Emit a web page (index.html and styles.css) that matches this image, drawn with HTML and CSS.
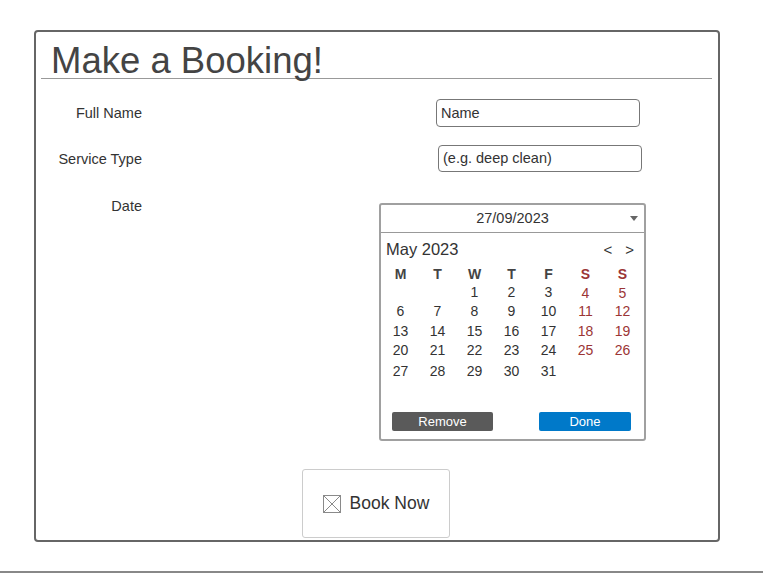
FILE: index.html
```html
<!DOCTYPE html>
<html>
<head>
<meta charset="utf-8">
<link rel="stylesheet" href="styles.css">
</head>
<body>
<div class="page">
  <div class="card">
    <h1 class="title">Make a Booking!</h1>
    <div class="row row-name">
      <div class="label">Full Name</div>
      <div class="input input-name">Name</div>
    </div>
    <div class="row row-service">
      <div class="label">Service Type</div>
      <div class="input input-service">(e.g. deep clean)</div>
    </div>
    <div class="row row-date">
      <div class="label label-date">Date</div>
      <div class="picker">
        <div class="picker-head">
          <span class="head-spacer"></span>
          <span class="head-value">27/09/2023</span>
          <span class="head-arrow">
            <svg width="8" height="5" viewBox="0 0 8 5"><path d="M0 0 L8 0 L4 5 Z" fill="#666"/></svg>
          </span>
        </div>
        <div class="month-row">
          <span class="month">May 2023</span>
          <span class="nav"><span>&lt;</span><span>&gt;</span></span>
        </div>
        <div class="cal">
          <span class="dh">M</span><span class="dh">T</span><span class="dh">W</span><span class="dh">T</span><span class="dh">F</span><span class="dh we">S</span><span class="dh we">S</span>
          <span></span><span></span><span>1</span><span>2</span><span>3</span><span class="we low">4</span><span class="we low">5</span>
          <span>6</span><span>7</span><span>8</span><span>9</span><span>10</span><span class="we">11</span><span class="we">12</span>
          <span>13</span><span>14</span><span>15</span><span>16</span><span>17</span><span class="we">18</span><span class="we">19</span>
          <span>20</span><span>21</span><span>22</span><span>23</span><span>24</span><span class="we">25</span><span class="we">26</span>
          <span>27</span><span>28</span><span>29</span><span>30</span><span>31</span><span></span><span></span>
        </div>
        <div class="picker-actions">
          <button class="btn btn-remove">Remove</button>
          <button class="btn btn-done">Done</button>
        </div>
      </div>
    </div>
    <div class="book-wrap">
      <button class="book">
        <svg width="18" height="18" viewBox="0 0 18 18">
          <rect x="0.5" y="0.5" width="17" height="17" fill="none" stroke="#8a8a8a" stroke-width="1"/>
          <line x1="0.5" y1="0.5" x2="17.5" y2="17.5" stroke="#8a8a8a" stroke-width="1"/>
          <line x1="17.5" y1="0.5" x2="0.5" y2="17.5" stroke="#8a8a8a" stroke-width="1"/>
        </svg>
        <span>Book Now</span>
      </button>
    </div>
  </div>
  <div class="bottom-line"></div>
</div>
</body>
</html>
```
FILE: styles.css
```css
* { box-sizing: border-box; }
html, body { margin: 0; padding: 0; background: #fff; }
body {
  font-family: "Liberation Sans", Arial, sans-serif;
  color: #333;
  width: 763px;
  height: 581px;
  overflow: hidden;
}
.page { padding-top: 30px; }
.card {
  margin-left: 34px;
  width: 686px;
  height: 512px;
  border: 2px solid #666;
  border-radius: 4px;
}
.title {
  margin: 6px 6px 0 5px;
  padding-left: 10px;
  height: 41px;
  line-height: 46px;
  font-size: 36.5px;
  font-weight: normal;
  color: #444;
  border-bottom: 1px solid #999;
  overflow: visible;
}
.row { display: flex; align-items: center; }
.label {
  width: 106px;
  text-align: right;
  font-size: 14.5px;
  color: #333;
  flex: none;
}
.input {
  height: 28px;
  width: 204px;
  border: 1px solid #777;
  border-radius: 4px;
  font-size: 14.5px;
  line-height: 26px;
  padding-left: 4px;
  color: #333;
}
.row-name { margin-top: 20px; }
.input-name { margin-left: 294px; }
.row-service { margin-top: 18px; }
.input-service { margin-left: 296px; height: 27px; line-height: 25px; }
.row-date { margin-top: 31px; align-items: flex-start; }
.label-date { line-height: 16px; margin-top: -5px; }
.picker {
  margin-left: 237px;
  width: 267px;
  border: 2px solid #a0a0a0;
  border-radius: 3px;
  padding-bottom: 8px;
}
.picker-head {
  display: flex;
  align-items: center;
  height: 28px;
  border-bottom: 1px solid #999;
  font-size: 14.5px;
  color: #333;
}
.head-spacer, .head-arrow { width: 14px; flex: none; display: flex; align-items: center; }
.head-value { flex: 1; text-align: center; padding-bottom: 2px; }
.head-arrow svg { display: block; }
.month-row {
  display: flex;
  align-items: center;
  justify-content: space-between;
  height: 32px;
  padding: 0 10px 0 5px;
}
.month { font-size: 16.5px; color: #333; }
.nav { display: flex; gap: 13px; font-size: 15px; color: #333; }
.cal {
  display: grid;
  grid-template-columns: repeat(7, 37px);
  grid-template-rows: 18px 18px 20px 19px 19px 23px;
  font-size: 14px;
  color: #333;
  padding-left: 1px;
}
.cal span { display: flex; align-items: center; justify-content: center; }
.cal .dh { font-weight: bold; color: #444; }
.cal .we { color: #9b3535; }
.cal .low { padding-top: 2px; }
.picker-actions {
  display: flex;
  margin-top: 30px;
  padding-left: 11px;
  gap: 46px;
}
.btn {
  height: 19px;
  border: none;
  border-radius: 2px;
  color: #fff;
  font-family: "Liberation Sans", Arial, sans-serif;
  font-size: 13px;
  padding: 0;
}
.btn-remove { width: 101px; background: #5a5a5a; }
.btn-done { width: 92px; background: #0079c9; }
.book-wrap { display: flex; justify-content: center; margin-top: 28px; padding-right: 2px; }
.book {
  width: 148px;
  height: 69px;
  border: 1px solid #ccc;
  border-radius: 3px;
  background: #fff;
  display: flex;
  align-items: center;
  justify-content: center;
  gap: 9px;
  font-family: "Liberation Sans", Arial, sans-serif;
  font-size: 17.5px;
  color: #333;
  padding: 0;
}
.book svg { display: block; }
.bottom-line {
  margin-top: 29px;
  border-top: 2px solid #888;
  width: 100%;
}
```
